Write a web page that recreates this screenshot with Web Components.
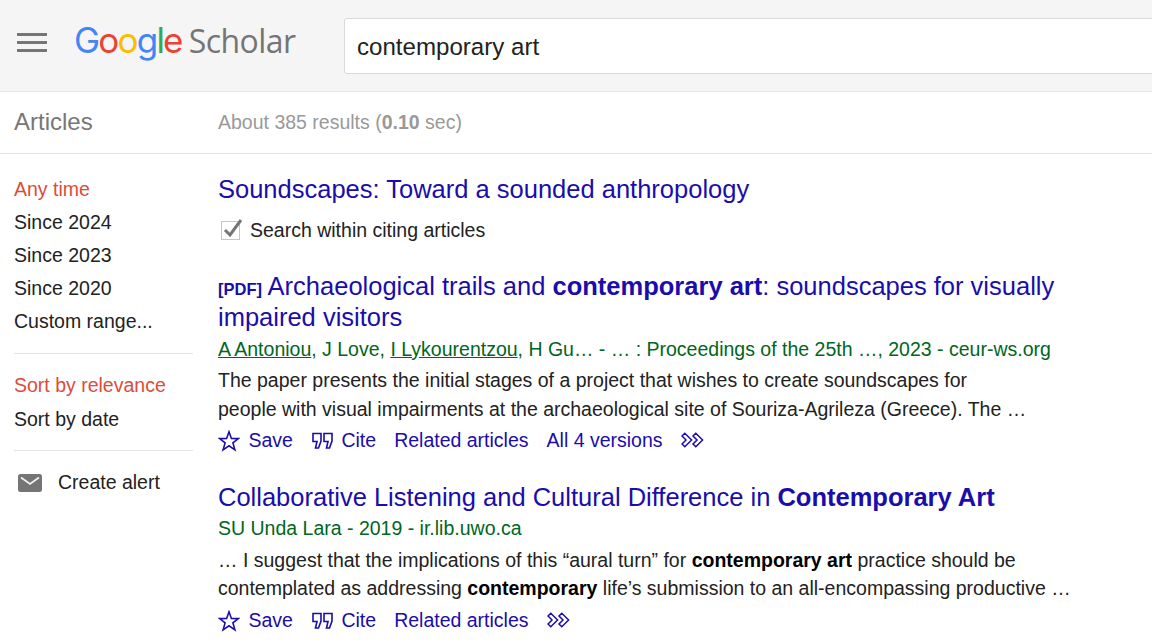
<!DOCTYPE html>
<html>
<head>
<meta charset="utf-8">
<title>Google Scholar</title>
<style>
    html, body { margin: 0; padding: 0; height: 643px; overflow: hidden; background: #fff; }
    body { font-family: "Liberation Sans", Arial, sans-serif; font-size: 19.5px; color: #222; }
    a { color: inherit; text-decoration: underline; }
</style>
</head>
<body>
<gs-header query="contemporary art"></gs-header>
<gs-subbar label="Articles"><span>About 385 results (<b>0.10</b> sec)</span></gs-subbar>
<gs-layout>
    <gs-sidebar slot="side"></gs-sidebar>
    <gs-citing slot="main" title="Soundscapes: Toward a sounded anthropology"></gs-citing>
    <gs-result slot="main" versions="All 4 versions" top="24">
        <span slot="title"><small-tag>[PDF]</small-tag> Archaeological trails and <b>contemporary art</b>: soundscapes for visually<br>impaired visitors</span>
        <span slot="authors"><a>A Antoniou</a>, J Love, <a>I Lykourentzou</a>, H Gu… - … : Proceedings of the 25th …, 2023 - ceur-ws.org</span>
        <span slot="snippet">The paper presents the initial stages of a project that wishes to create soundscapes for<br>people with visual impairments at the archaeological site of Souriza-Agrileza (Greece). The …</span>
    </gs-result>
    <gs-result slot="main" top="25.3">
        <span slot="title">Collaborative Listening and Cultural Difference in <b>Contemporary Art</b></span>
        <span slot="authors">SU Unda Lara - 2019 - ir.lib.uwo.ca</span>
        <span slot="snippet">… I suggest that the implications of this “aural turn” for <b style="color:#000">contemporary art</b> practice should be<br>contemplated as addressing <b style="color:#000">contemporary</b> life’s submission to an all-encompassing productive …</span>
    </gs-result>
</gs-layout>

<script>
class GsHeader extends HTMLElement {
    constructor() {
        super();
        this.attachShadow({ mode: 'open' });
    }

    connectedCallback() {
        const query = this.getAttribute('query') || '';
        this.shadowRoot.innerHTML = `
            <style>
                :host {
                    display: flex;
                    align-items: center;
                    height: 91px;
                    background: #f5f5f5;
                    border-bottom: 1px solid #e5e5e5;
                    overflow: hidden;
                }
                .menu { width: 30px; height: 19px; margin-left: 17px; margin-top: -6px; flex: none; display: block; }
                .logo {
                    display: flex;
                    align-items: baseline;
                    margin-left: 27px;
                    margin-top: -11px;
                    width: 270px;
                    flex: none;
                    font-family: Inter, sans-serif;
                    font-size: 35px;
                    font-weight: 400;
                    letter-spacing: -1.8px;
                    line-height: 40px;
                }
                .scholar {
                    color: #757575;
                    margin-left: 7px;
                    font-family: "Open Sans", sans-serif;
                    font-weight: 400;
                    font-size: 32px;
                    letter-spacing: -0.55px;
                }
                .search {
                    flex: none;
                    width: 900px;
                    height: 54px;
                    margin-top: 1px;
                    background: #fff;
                    border: 1px solid #d9d9d9;
                    border-radius: 3px;
                    padding-left: 12px;
                    line-height: 55px;
                    font-size: 24.1px;
                    color: #222;
                }
            </style>
            <svg class="menu" viewBox="0 0 30 19">
                <rect y="0" width="30" height="3" fill="#757575"/>
                <rect y="8" width="30" height="3" fill="#757575"/>
                <rect y="16" width="30" height="3" fill="#757575"/>
            </svg>
            <div class="logo">
                <span style="color:#4285f4">G</span><span style="color:#ea4335">o</span><span style="color:#fbbc05">o</span><span style="color:#4285f4">g</span><span style="color:#34a853">l</span><span style="color:#ea4335">e</span>
                <span class="scholar">Scholar</span>
            </div>
            <div class="search">${query}</div>
        `;
    }
}
customElements.define('gs-header', GsHeader);

class GsSubbar extends HTMLElement {
    constructor() {
        super();
        this.attachShadow({ mode: 'open' });
    }

    connectedCallback() {
        const label = this.getAttribute('label') || '';
        this.shadowRoot.innerHTML = `
            <style>
                :host {
                    display: flex;
                    align-items: center;
                    height: 61px;
                    border-bottom: 1px solid #e5e5e5;
                    background: #fff;
                }
                .label { width: 218px; padding-left: 14px; box-sizing: border-box; font-size: 24px; line-height: 58px; margin-top: -1px; color: #777; flex: none; }
                .count { color: #999; font-size: 19.5px; }
            </style>
            <div class="label">${label}</div>
            <div class="count"><slot></slot></div>
        `;
    }
}
customElements.define('gs-subbar', GsSubbar);

class GsLayout extends HTMLElement {
    constructor() {
        super();
        this.attachShadow({ mode: 'open' });
    }

    connectedCallback() {
        this.shadowRoot.innerHTML = `
            <style>
                :host { display: flex; }
                .side { width: 204px; flex: none; }
                .main { flex: 1; padding-left: 14px; padding-top: 19px; min-width: 0; }
            </style>
            <div class="side"><slot name="side"></slot></div>
            <div class="main"><slot name="main"></slot></div>
        `;
    }
}
customElements.define('gs-layout', GsLayout);

class GsSidebar extends HTMLElement {
    constructor() {
        super();
        this.attachShadow({ mode: 'open' });
    }

    connectedCallback() {
        this.shadowRoot.innerHTML = `
            <style>
                :host { display: block; padding: 19px 11px 0 14px; font-size: 19.5px; color: #222; }
                .row { height: 33px; line-height: 33px; white-space: nowrap; }
                .on { color: #dd4b39; }
                hr { border: 0; border-top: 1px solid #e5e5e5; margin: 0; }
                .alert { display: flex; align-items: center; gap: 16px; padding-left: 4px; margin-top: 15px; }
                .alert svg { width: 24px; height: 18px; flex: none; }
            </style>
            <div class="row on">Any time</div>
            <div class="row">Since 2024</div>
            <div class="row">Since 2023</div>
            <div class="row">Since 2020</div>
            <div class="row">Custom range...</div>
            <hr style="margin-top:15px">
            <div class="row on" style="margin-top:15px">Sort by relevance</div>
            <div class="row" style="margin-top:1px">Sort by date</div>
            <hr style="margin-top:14px">
            <div class="row alert">
                <svg viewBox="0 0 24 18">
                    <rect width="24" height="18" rx="2.5" fill="#757575"/>
                    <path d="M3 3.5 L12 10 L21 3.5" fill="none" stroke="#f1f1f1" stroke-width="1.8"/>
                </svg>
                <span>Create alert</span>
            </div>
        `;
    }
}
customElements.define('gs-sidebar', GsSidebar);

class GsCiting extends HTMLElement {
    constructor() {
        super();
        this.attachShadow({ mode: 'open' });
    }

    connectedCallback() {
        const title = this.getAttribute('title') || '';
        this.shadowRoot.innerHTML = `
            <style>
                :host { display: block; }
                .title { font-size: 25.5px; line-height: 33px; color: #1a0dab; height: 33px; }
                .check { display: flex; align-items: center; gap: 7px; height: 33px; margin-top: 8px; font-size: 19.5px; padding-left: 2px; }
                svg { width: 23px; height: 23px; flex: none; margin-top: -2px; }
            </style>
            <div class="title">${title}</div>
            <div class="check">
                <svg viewBox="0 0 23 23">
                    <rect x="1.5" y="3.5" width="18" height="18" fill="#fff" stroke="#c6c6c6"/>
                    <path d="M5 12 L10 17 L21 2" fill="none" stroke="#757575" stroke-width="3"/>
                </svg>
                <span>Search within citing articles</span>
            </div>
        `;
    }
}
customElements.define('gs-citing', GsCiting);

class SmallTag extends HTMLElement {
    constructor() {
        super();
        this.attachShadow({ mode: 'open' });
    }

    connectedCallback() {
        this.shadowRoot.innerHTML = `
            <style>:host { display: inline; font-size: 16.5px; font-weight: bold; line-height: 1; padding-right: 1px; }</style>
            <slot></slot>
        `;
    }
}
customElements.define('small-tag', SmallTag);

class GsResult extends HTMLElement {
    constructor() {
        super();
        this.attachShadow({ mode: 'open' });
    }

    connectedCallback() {
        const versions = this.getAttribute('versions');
        const top = this.getAttribute('top') || '0';
        this.shadowRoot.innerHTML = `
            <style>
                :host { display: block; margin-top: ${top}px; }
                .title { font-size: 25.5px; line-height: 31px; color: #1a0dab; }
                .authors { font-size: 19.5px; line-height: 31px; color: #006621; white-space: nowrap; margin-top: 0.6px; }
                .snippet { font-size: 19.5px; line-height: 28.6px; color: #222; margin-top: 1.5px; white-space: nowrap; }
                .actions { display: flex; align-items: center; height: 31px; margin-top: 2.1px; color: #1a0dab; font-size: 19.5px; white-space: nowrap; }
                .actions svg { flex: none; display: block; }
                .star { width: 22px; height: 22px; margin-right: 8.5px; }
                .quote { width: 21px; height: 18px; margin: 0 8px 0 19.5px; }
                .rel { margin-left: 18px; }
                .more { width: 24px; height: 16px; margin-left: 18px; margin-top: -2px; }
                .ver { margin-left: 18px; }
            </style>
            <div class="title"><slot name="title"></slot></div>
            <div class="authors"><slot name="authors"></slot></div>
            <div class="snippet"><slot name="snippet"></slot></div>
            <div class="actions">
                <svg class="star" viewBox="0 0 22 22"><path d="M11 1.8 L13.4 8.4 L20.4 8.6 L14.9 12.9 L16.9 19.8 L11 15.8 L5.1 19.8 L7.1 12.9 L1.6 8.6 L8.6 8.4 Z" fill="none" stroke="#1a0dab" stroke-width="1.6"/></svg>
                <span>Save</span>
                <svg class="quote" viewBox="0 0 21 18"><path d="M1 1.5 H9 V9 L6.5 16 H3.5 L5 9.5 H1 Z M12 1.5 H20 V9 L17.5 16 H14.5 L16 9.5 H12 Z" fill="none" stroke="#1a0dab" stroke-width="1.6"/></svg>
                <span>Cite</span>
                <span class="rel">Related articles</span>
                ${versions ? `<span class="ver">${versions}</span>` : ''}
                <svg class="more" viewBox="0 0 24 16"><path d="M1 4 L3.8 1.2 L10.6 8 L3.8 14.8 L1 12 L5 8 Z M12 4 L14.8 1.2 L21.6 8 L14.8 14.8 L12 12 L16 8 Z" fill="none" stroke="#1a0dab" stroke-width="1.5"/></svg>
            </div>
        `;
    }
}
customElements.define('gs-result', GsResult);
</script>
</body>
</html>
